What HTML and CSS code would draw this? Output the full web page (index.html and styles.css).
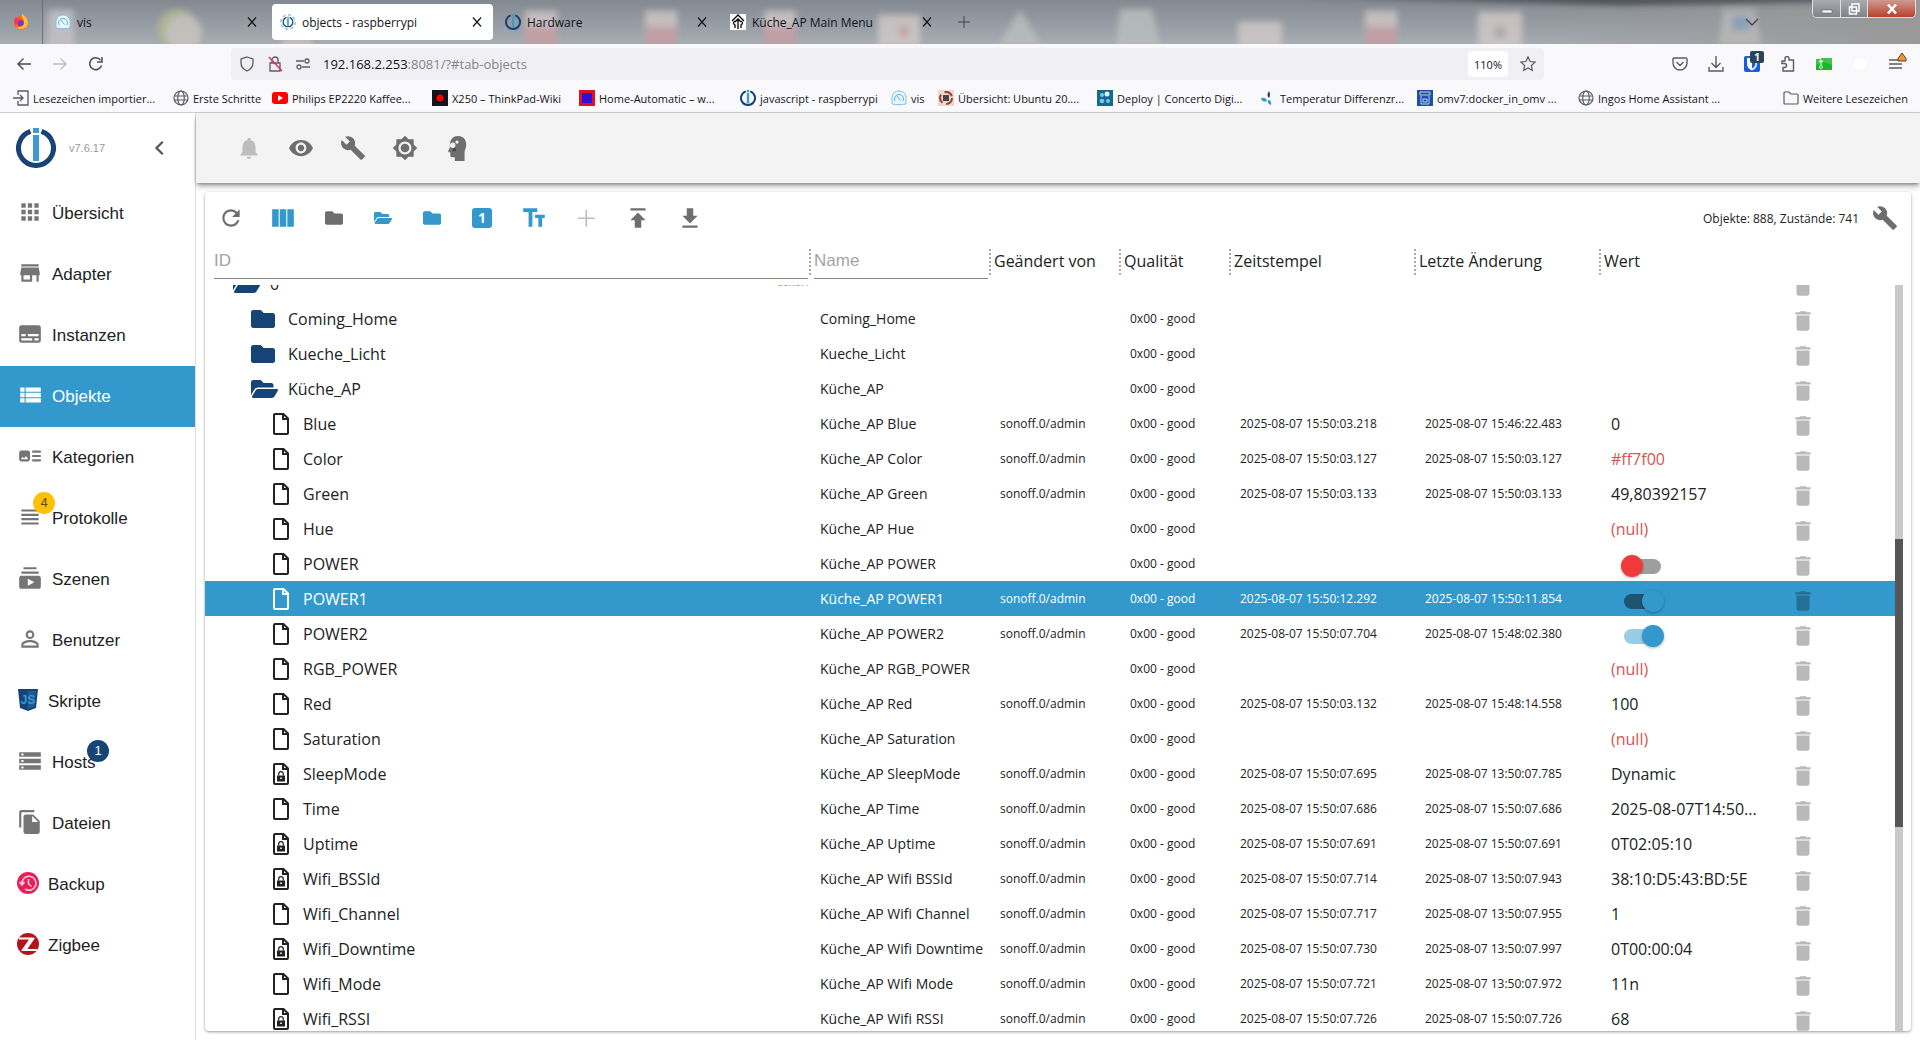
FILE: index.html
```html
<!DOCTYPE html>
<html lang="de">
<head>
  <meta charset="UTF-8">
  <meta name="viewport" content="width=device-width, initial-scale=1.0">
  <title>objects - raspberrypi</title>
  <link rel="stylesheet" href="styles.css">
</head>
<body>
  <!-- icon set -->
  <svg class="sprite" aria-hidden="true">
    <symbol id="close" viewBox="0 0 16 16"><path d="M4 3.5l8 9M12 3.5l-8 9" stroke="currentColor" stroke-width="1.2" fill="none"/></symbol>
    <symbol id="iobroker" viewBox="0 0 40 40">
      <path d="M14.500 3.400a17.500 17.500 0 1 0 11 0" fill="none" stroke="#164477" stroke-width="5"/>
      <path d="M17 7h6v26h-6zM17 0h6v5h-6z" fill="#3f9bc9"/>
    </symbol>
    <symbol id="vis" viewBox="0 0 16 16">
      <path d="M1 14V7q1-6 7-6t7 6v7q-7 1.500-14 0z" fill="#e8f6fd" stroke="#7cc3e6"/>
      <path d="M4 11a4.500 4.500 0 1 1 8 0M5.500 5.500l4 5" fill="none" stroke="#5aaedb"/>
    </symbol>
    <symbol id="globe" viewBox="0 0 16 16"><g fill="none" stroke="#5b5b66" stroke-width="1.200"><circle cx="8" cy="8" r="7"/><ellipse cx="8" cy="8" rx="3.300" ry="7"/><path d="M1 6h14M1 10h14"/></g></symbol>
    <symbol id="refresh" viewBox="0 0 24 24"><path d="M17.65 6.35C16.2 4.9 14.21 4 12 4c-4.42 0-7.99 3.58-7.99 8s3.57 8 7.990 8c3.730 0 6.840-2.550 7.730-6h-2.080c-.82 2.330-3.040 4-5.650 4-3.310 0-6-2.690-6-6s2.690-6 6-6c1.660 0 3.140.69 4.220 1.780L13 11h7V4l-2.350 2.350z"/></symbol>
    <symbol id="columns" viewBox="0 0 24 24"><path d="M2 4h6v16H2zM9 4h6v16H9zM16 4h6v16h-6z"/></symbol>
    <symbol id="folder" viewBox="0 0 512 512"><path d="M464 128H272l-64-64H48C21.490 64 0 85.490 0 112v288c0 26.510 21.490 48 48 48h416c26.510 0 48-21.490 48-48V176c0-26.510-21.490-48-48-48z"/></symbol>
    <symbol id="folder-open" viewBox="0 0 576 512"><path d="M572.694 292.093L500.270 416.248A63.997 63.997 0 0 1 444.989 448H45.025c-18.523 0-30.064-20.093-20.731-36.093l72.424-124.155A64 64 0 0 1 152 256h399.964c18.523 0 30.064 20.093 20.730 36.093zM152 224h328v-48c0-26.510-21.490-48-48-48H272l-64-64H48C21.490 64 0 85.490 0 112v278.046l69.077-118.418C86.214 242.250 117.989 224 152 224z"/></symbol>
    <symbol id="file" viewBox="0 0 16 22"><path d="M2 1h8.500L15 5.500V20q0 1-1 1H2q-1 0-1-1V2q0-1 1-1zM10 1v5h5" fill="none" stroke="currentColor" stroke-width="2"/></symbol>
    <symbol id="file-lock" viewBox="0 0 16 22"><path d="M2 1h8.500L15 5.500V20q0 1-1 1H2q-1 0-1-1V2q0-1 1-1zM10 1v5h5" fill="none" stroke="currentColor" stroke-width="2"/><path d="M5.700 12.500v-1.500a2.300 2.300 0 0 1 4.600 0v1.500" fill="none" stroke="currentColor" stroke-width="1.200"/><path fill-rule="evenodd" d="M4 12.500h8v6H4zM7.200 14.500v1.500h1.600v-1.500z"/></symbol>
    <symbol id="text-size" viewBox="0 0 24 24"><path d="M2 3h13v3.500H2zM7 3h3.500v17H7zM13 9h9v3h-9zM16 9h3.500v11H16z"/></symbol>
    <symbol id="plus" viewBox="0 0 24 24"><path d="M20 13h-7v7h-1.500v-7h-7v-1.500h7v-7H13v7h7z"/></symbol>
    <symbol id="publish" viewBox="0 0 24 24"><path d="M5 3v2h14V3H5zm0 11h4v7h6v-7h4l-7-7-7 7z"/></symbol>
    <symbol id="get" viewBox="0 0 24 24"><path d="M19 10h-4V3H9v7H5l7 7 7-7zM5 19v2h14v-2H5z"/></symbol>
    <symbol id="build" viewBox="0 0 24 24"><path d="M22.700 19l-9.100-9.100c.9-2.300.4-5-1.500-6.900-2-2-5-2.400-7.400-1.300L9 6 6 9 1.600 4.700C.4 7.100.9 10.100 2.900 12.100c1.900 1.900 4.600 2.400 6.900 1.500l9.100 9.100c.4.4 1 .4 1.400 0l2.300-2.300c.5-.4.5-1.100.1-1.400z"/></symbol>
    <symbol id="bell" viewBox="0 0 24 24"><path d="M12 22c1.100 0 2-.9 2-2h-4c0 1.100.89 2 2 2zm6-6v-5c0-3.070-1.640-5.640-4.500-6.320V4c0-.83-.67-1.500-1.500-1.500s-1.500.67-1.500 1.500v.68C7.630 5.360 6 7.920 6 11v5l-2 2v1h16v-1l-2-2z"/></symbol>
    <symbol id="eye" viewBox="0 0 24 24"><path d="M12 4.500C7 4.500 2.730 7.610 1 12c1.730 4.390 6 7.500 11 7.500s9.270-3.110 11-7.500c-1.730-4.390-6-7.500-11-7.500zM12 17c-2.760 0-5-2.240-5-5s2.240-5 5-5 5 2.240 5 5-2.240 5-5 5zm0-8c-1.660 0-3 1.340-3 3s1.340 3 3 3 3-1.340 3-3-1.340-3-3-3z"/></symbol>
    <symbol id="brightness" viewBox="0 0 24 24"><path d="M20 15.310L23.310 12 20 8.690V4h-4.690L12 .69 8.690 4H4v4.690L.69 12 4 15.310V20h4.690L12 23.310 15.310 20H20v-4.690zM12 18c-3.310 0-6-2.690-6-6s2.690-6 6-6 6 2.690 6 6-2.690 6-6 6z"/><circle cx="12" cy="12" r="4"/></symbol>
    <symbol id="head" viewBox="0 0 24 24"><path d="M13 1c5 0 7.500 3.500 7.500 8 0 3-1.500 5-1.500 6.500V24h-9v-3.500H7.500q-1.700 0-1.700-1.700V16H4v-1.500l1.500-3.200C5 5 7.500 1 13 1z"/><circle cx="8" cy="9.500" r="2.500" fill="#f3f3f3"/><circle cx="12" cy="6.500" r="1.500" fill="#f3f3f3"/><circle cx="9.500" cy="13.500" r="1.500" fill="#444"/></symbol>
    <symbol id="delete" viewBox="0 0 24 24"><path d="M6 19c0 1.100.9 2 2 2h8c1.100 0 2-.9 2-2V7H6v12zM19 4h-3.500l-1-1h-5l-1 1H5v2h14V4z"/></symbol>
    <symbol id="apps" viewBox="0 0 24 24"><path d="M4 8h4V4H4v4zm6 12h4v-4h-4v4zm-6 0h4v-4H4v4zm0-6h4v-4H4v4zm6 0h4v-4h-4v4zm6-10v4h4V4h-4zm-6 4h4V4h-4v4zm6 6h4v-4h-4v4zm0 6h4v-4h-4v4z"/></symbol>
    <symbol id="store" viewBox="0 0 24 24"><path d="M20 4H4v2h16V4zm1 10v-2l-1-5H4l-1 5v2h1v6h10v-6h4v6h2v-6h1zm-9 4H6v-4h6v4z"/></symbol>
    <symbol id="subtitles" viewBox="0 0 24 24"><path d="M20 4H4c-1.100 0-2 .9-2 2v12c0 1.100.9 2 2 2h16c1.100 0 2-.9 2-2V6c0-1.100-.9-2-2-2zM4 12h4v2H4v-2zm10 6H4v-2h10v2zm6 0h-4v-2h4v2zm0-4H10v-2h10v2z"/></symbol>
    <symbol id="view-list" viewBox="0 0 24 24"><path d="M3 14h4v-4H3v4zm0 5h4v-4H3v4zM3 9h4V5H3v4zm5 5h14v-4H8v4zm0 5h14v-4H8v4zM8 5v4h14V5H8z"/></symbol>
    <symbol id="art-track" viewBox="0 0 24 24"><path d="M22 13h-8v-2h8v2zm0-6h-8v2h8V7zm-8 10h8v-2h-8v2zm-2-8v6c0 1.100-.9 2-2 2H4c-1.100 0-2-.9-2-2V9c0-1.100.9-2 2-2h6c1.100 0 2 .9 2 2zm-1.500 6l-2.250-3-1.750 2.260-1.250-1.510L3.500 15h7z"/></symbol>
    <symbol id="headline" viewBox="0 0 24 24"><path d="M4 15h16v-2H4v2zm0 4h16v-2H4v2zm0-8h16V9H4v2zm0-6v2h16V5H4z"/></symbol>
    <symbol id="scenes" viewBox="0 0 24 24"><path d="M20 8H4V6h16v2zm-2-6H6v2h12V2zm4 10v8c0 1.100-.9 2-2 2H4c-1.100 0-2-.9-2-2v-8c0-1.100.9-2 2-2h16c1.100 0 2 .9 2 2zm-6 4l-6-3.270v6.530L16 16z"/></symbol>
    <symbol id="person" viewBox="0 0 24 24"><path d="M12 5.900a2.100 2.100 0 1 1 0 4.200 2.100 2.100 0 0 1 0-4.200m0 9c2.970 0 6.100 1.460 6.100 2.100v1.100H5.900V17c0-.64 3.130-2.100 6.100-2.100M12 4C9.790 4 8 5.790 8 8s1.790 4 4 4 4-1.790 4-4-1.790-4-4-4zm0 9c-2.670 0-8 1.340-8 4v3h16v-3c0-2.660-5.330-4-8-4z"/></symbol>
    <symbol id="storage" viewBox="0 0 24 24"><path d="M2 20h20v-4H2v4zm2-3h2v2H4v-2zM2 4v4h20V4H2zm4 3H4V5h2v2zm-4 7h20v-4H2v4zm2-3h2v2H4v-2z"/></symbol>
    <symbol id="files" viewBox="0 0 24 24"><path d="M16 1H4c-1.100 0-2 .9-2 2v14h2V3h12V1zm-1 4l6 6v10c0 1.100-.9 2-2 2H7.990C6.890 23 6 22.100 6 21l.01-14c0-1.100.89-2 1.990-2h7zm-1 7h5.500L14 6.500V12z"/></symbol>
  </svg>

  <header class="browser">
    <div class="titlebar">
      <!-- desktop icons shining through the glass frame -->
      <svg class="glass" viewBox="0 0 1920 44" preserveAspectRatio="none" aria-hidden="true">
        <defs>
          <filter id="soft" x="-5%" y="-50%" width="110%" height="200%"><feGaussianBlur stdDeviation="3"/></filter>
          <linearGradient id="pane" x1="0" y1="0" x2="0" y2="1"><stop offset="0" stop-color="#838991"/><stop offset="1" stop-color="#a7adb3"/></linearGradient>
          <linearGradient id="grey" x1="0" x2="1"><stop offset="0" stop-color="#999" stop-opacity="0"/><stop offset="1" stop-color="#999"/></linearGradient>
        </defs>
        <rect width="1920" height="44" fill="url(#pane)"/>
        <rect x="1500" width="420" height="44" fill="url(#grey)"/>
        <g filter="url(#soft)" opacity=".85">
          <path d="M1300-4h520v6l-200 3z" fill="#3e3f46"/>
          <rect x="48" y="10" width="26" height="40" fill="#c4c1c4"/>
          <circle cx="178" cy="29" r="20" fill="#b3ba90"/><circle cx="184" cy="33" r="18" fill="#c9c5bf"/>
          <rect x="282" y="38" width="30" height="12" fill="#ccc2c0"/>
          <g fill="#cdc4c5"><rect x="525" y="11" width="32" height="20"/><rect x="645" y="11" width="32" height="20"/><rect x="764" y="11" width="32" height="20"/><rect x="1365" y="11" width="32" height="20"/></g>
          <g fill="#c79fa4"><rect x="525" y="27" width="32" height="20"/><rect x="645" y="27" width="32" height="20"/><rect x="764" y="27" width="32" height="20"/><rect x="1365" y="27" width="32" height="20"/></g>
          <g fill="#cfc7c6"><rect x="878" y="15" width="42" height="32"/><rect x="1238" y="22" width="44" height="26"/><rect x="1478" y="12" width="44" height="38"/></g>
          <path d="M998 46l22-36 22 36zM1120 9h32l8 38h-44z" fill="#b9bdbd"/>
          <path d="M1724 10h30l8 36h-44z" fill="#b9b9b5"/><rect x="1732" y="16" width="18" height="14" fill="#86a0bd"/>
          <circle cx="904" cy="32" r="5" fill="#cb9b9f"/><circle cx="1500" cy="32" r="6" fill="#aaa"/>
        </g>
      </svg>
      <div class="pinned">
        <svg width="16" height="16" viewBox="0 0 16 16" aria-hidden="true"><circle cx="8" cy="9" r="7" fill="#ff5e2b"/><path d="M9 0q6 4 6 9a7 7 0 0 1-12 4q8 1 8-5 0-3-2-4z" fill="#ffc130"/><circle cx="7.500" cy="9" r="3.200" fill="#6f3ac6"/><path d="M1 9q0-4 2-6l2 2 3 1-3 2v2z" fill="#ff2f55"/></svg>
      </div>
      <nav class="tabs" aria-label="Tabs">
        <div class="tab"><svg class="fav"><use href="#vis"/></svg><span>vis</span><button aria-label="Tab schließen"><svg><use href="#close"/></svg></button></div>
        <div class="tab tab--active"><svg class="fav" viewBox="0 0 40 40"><circle cx="20" cy="20" r="18" fill="none" stroke="#9fc4dc" stroke-width="4" stroke-dasharray="8 6"/><use href="#iobroker" x="6" y="6" width="28" height="28"/></svg><span>objects - raspberrypi</span><button aria-label="Tab schließen"><svg><use href="#close"/></svg></button></div>
        <div class="tab"><svg class="fav"><use href="#iobroker"/></svg><span>Hardware</span><button aria-label="Tab schließen"><svg><use href="#close"/></svg></button></div>
        <div class="tab"><svg class="fav" viewBox="0 0 16 16"><path d="M0 0h16v16H0z" fill="#fff"/><path d="M2 7l6-6 6 6M8 15V5M5 8l3-3 3 3M5 14V11q-3-2 0-4M11 14v-3q3-2 0-4" fill="none" stroke="#000" stroke-width="1.300"/></svg><span>Küche_AP Main Menu</span><button aria-label="Tab schließen"><svg><use href="#close"/></svg></button></div>
        <button class="new-tab" aria-label="Neuer Tab"><svg viewBox="0 0 16 16"><path d="M8 2v12M2 8h12" stroke="#444" fill="none"/></svg></button>
      </nav>
      <button class="tab-list" aria-label="Alle Tabs"><svg viewBox="0 0 16 16"><path d="M2 5l6 6 6-6" stroke="#444" stroke-width="1.300" fill="none"/></svg></button>
      <div class="window-buttons">
        <button aria-label="Minimieren"><svg viewBox="0 0 16 12"><path d="M3 7h10v3H3z" fill="#fff" stroke="#555" stroke-width=".6"/></svg></button>
        <button aria-label="Verkleinern"><svg viewBox="0 0 16 12"><path d="M6 1h7v7H6zM3.500 4h7v7h-7z" fill="#8b8f96" stroke="#fff" stroke-width="1.500"/></svg></button>
        <button class="window-close" aria-label="Schließen"><svg viewBox="0 0 16 12"><path d="M4 1.500l8 9M12 1.500l-8 9" stroke="#fff" stroke-width="2.600"/></svg></button>
      </div>
    </div>

    <div class="navbar">
      <div class="nav-buttons">
        <button aria-label="Zurück"><svg viewBox="0 0 16 16"><path d="M15 8H2M7.500 2.500L2 8l5.500 5.500" fill="none" stroke="#4b4b55" stroke-width="1.400"/></svg></button>
        <button aria-label="Vor" disabled><svg viewBox="0 0 16 16"><path d="M1 8h13M8.500 2.500L14 8l-5.500 5.500" fill="none" stroke="#bdbdc4" stroke-width="1.400"/></svg></button>
        <button aria-label="Neu laden"><svg viewBox="0 0 16 16"><path d="M13.500 9.500A6 6 0 1 1 12.500 4M14 1v5H9" fill="none" stroke="#4b4b55" stroke-width="1.500"/></svg></button>
      </div>
      <div class="urlbar">
        <svg viewBox="0 0 16 16"><path d="M8 1l6 2v4q0 5.500-6 8-6-2.500-6-8V3z" fill="none" stroke="#5b5b66" stroke-width="1.300"/></svg>
        <svg viewBox="0 0 16 16"><path d="M3 7h10v8H3zM5 7V4a3 3 0 0 1 6 0v3" fill="none" stroke="#5b5b66" stroke-width="1.300"/><path d="M2 1l13 14" stroke="#e22850" stroke-width="1.400"/></svg>
        <svg viewBox="0 0 16 16"><path d="M1 5h8M7 11h8" stroke="#5b5b66" stroke-width="1.500"/><circle cx="12" cy="5" r="2" fill="none" stroke="#5b5b66" stroke-width="1.300"/><circle cx="4" cy="11" r="2" fill="none" stroke="#5b5b66" stroke-width="1.300"/></svg>
        <p class="address">192.168.2.253<span>:8081/?#tab-objects</span></p>
        <button class="zoom">110%</button>
        <button class="star" aria-label="Lesezeichen"><svg viewBox="0 0 16 16"><path d="M8 1l2.100 4.500 4.900.6-3.600 3.400.9 4.900L8 12l-4.300 2.400.9-4.900L1 6.100l4.900-.6z" fill="none" stroke="#5b5b66" stroke-width="1.200"/></svg></button>
      </div>
      <div class="extensions">
        <button aria-label="Pocket"><svg viewBox="0 0 16 16"><path d="M2 2h12q1 0 1 1v4a7 7 0 0 1-14 0V3q0-1 1-1zM4.500 6L8 9.500 11.500 6" fill="none" stroke="#5b5b66" stroke-width="1.400"/></svg></button>
        <button aria-label="Downloads"><svg viewBox="0 0 16 16"><path d="M8 0v11M3.500 7L8 11.500 12.500 7M1 11v4h14v-4" fill="none" stroke="#5b5b66" stroke-width="1.400"/></svg></button>
        <button aria-label="Bitwarden"><svg viewBox="0 0 16 16"><rect width="16" height="16" rx="2" fill="#175ddc"/><path d="M3 2h10v6q0 4-5 6.500Q3 12 3 8z" fill="#fff"/><path d="M8 3.500h3.500V8q0 2.500-3.500 4.500z" fill="#175ddc"/></svg><span class="ext-badge">1</span></button>
        <button aria-label="Erweiterungen"><svg viewBox="0 0 16 16"><path d="M5 5V2.500a2 2 0 0 1 4 0V4h4.500v11H3v-3.500h1.500a2 2 0 0 0 0-4H2V5z" fill="none" stroke="#5b5b66" stroke-width="1.400"/></svg></button>
        <button aria-label="Übersetzer"><svg viewBox="0 0 16 16"><path d="M0 3h5v-1h11v12H0z" fill="#3cc645"/><path d="M0 9l8-3 8 3v5H0z" fill="#25b02e"/><path d="M5 4v5M3 6l2-2 2 2" stroke="#d9fadb" stroke-width="1.200" fill="none"/><circle cx="5" cy="11" r="1.500" fill="none" stroke="#d9fadb"/></svg></button>
        <button aria-label="Addon"><svg viewBox="0 0 16 16"><circle cx="8" cy="8" r="6" fill="#fff"/></svg></button>
        <button aria-label="Menü"><svg viewBox="0 0 16 16"><path d="M1 4h13M1 8h13M1 12h13" stroke="#5b5b66" stroke-width="1.300"/></svg><svg class="menu-alert" viewBox="0 0 10 10"><path d="M5 1l4 5.500v2.500H1V6.500z" fill="#f0953b" stroke="#5e3e1e"/></svg></button>
      </div>
    </div>

    <nav class="bookmarks" aria-label="Lesezeichen">
      <a href="#"><svg viewBox="0 0 16 16"><path d="M5 5V1h10v14H5v-4M0 8h10M7 5l3 3-3 3" fill="none" stroke="#5b5b66" stroke-width="1.300"/></svg>Lesezeichen importier...</a>
      <a href="#"><svg><use href="#globe"/></svg>Erste Schritte</a>
      <a href="#"><svg viewBox="0 0 16 16"><rect y="2" width="16" height="12" rx="3" fill="#f00"/><path d="M6 5l5 3-5 3z" fill="#fff"/></svg>Philips EP2220 Kaffee...</a>
      <a href="#"><svg viewBox="0 0 16 16"><path d="M0 0h16v16H0z"/><circle cx="8" cy="8" r="3.500" fill="#f00"/></svg>X250 – ThinkPad-Wiki</a>
      <a href="#"><svg viewBox="0 0 16 16"><path d="M0 0h16v16H0z" fill="#e01020"/><path d="M3 3h10v10H3z" fill="#2a10d8"/></svg>Home-Automatic – w...</a>
      <a href="#"><svg><use href="#iobroker"/></svg>javascript - raspberrypi</a>
      <a href="#"><svg><use href="#vis"/></svg>vis</a>
      <a href="#"><svg viewBox="0 0 16 16"><path d="M0 0h16v16H0z" fill="#e5dccb"/><circle cx="8" cy="8" r="6" fill="none" stroke="#a33a35" stroke-width="2" stroke-dasharray="9 4"/><path d="M5 5h6v6H5z" fill="#444"/></svg>Übersicht: Ubuntu 20....</a>
      <a href="#"><svg viewBox="0 0 16 16"><path d="M0 0h16v16H0z" fill="#136a8c"/><g fill="#7cc7e6"><circle cx="5" cy="5" r="2"/><circle cx="10" cy="4" r="2.500" fill="#dff3fb"/><circle cx="5" cy="11" r="2.300"/><circle cx="11" cy="11" r="2"/></g></svg>Deploy | Concerto Digi...</a>
      <a href="#"><svg viewBox="0 0 16 16"><path d="M9 1q-3 4 0 7 2-3 0-7z" fill="#164477"/><path d="M1 8q5-1 6 3-5 2-6-3zM8 10q4 0 3 5-4-1-3-5z" fill="#3399cc"/></svg>Temperatur Differenzr...</a>
      <a href="#"><svg viewBox="0 0 16 16"><path d="M0 0h16v16H0z" fill="#1d4fa8"/><path d="M3 2h10v3H3zM4 6v8h8V6M6 9h4v3H6z" fill="none" stroke="#b9d0f5"/></svg>omv7:docker_in_omv ...</a>
      <a href="#"><svg><use href="#globe"/></svg>Ingos Home Assistant ...</a>
      <a href="#" class="bookmarks__more"><svg viewBox="0 0 16 16"><path d="M1 3q0-1 1-1h4l2 2h6q1 0 1 1v8q0 1-1 1H2q-1 0-1-1z" fill="none" stroke="#5b5b66" stroke-width="1.200"/></svg>Weitere Lesezeichen</a>
    </nav>
  </header>

  <div class="app">
    <aside class="sidebar">
      <div class="brand">
        <svg class="brand__logo"><use href="#iobroker"/></svg>
        <span class="brand__version">v7.6.17</span>
        <button class="brand__toggle" aria-label="Menü einklappen"><svg viewBox="0 0 16 16"><path d="M11 3L6 8l5 5" fill="none" stroke="#555" stroke-width="1.800"/></svg></button>
      </div>
      <nav class="menu">
        <a href="#"><svg><use href="#apps"/></svg>Übersicht</a>
        <a href="#"><svg><use href="#store"/></svg>Adapter</a>
        <a href="#"><svg><use href="#subtitles"/></svg>Instanzen</a>
        <a href="#" class="menu__active"><svg><use href="#view-list"/></svg>Objekte</a>
        <a href="#"><svg><use href="#art-track"/></svg>Kategorien</a>
        <a href="#"><svg><use href="#headline"/></svg>Protokolle<span class="badge badge--warn">4</span></a>
        <a href="#"><svg><use href="#scenes"/></svg>Szenen</a>
        <a href="#"><svg><use href="#person"/></svg>Benutzer</a>
        <a href="#" class="menu__custom"><svg viewBox="0 0 22 22"><path d="M1 0h20l-2 19-8 3-8-3z" fill="#164477"/><path d="M11 2h8l-1.500 15.500L11 20z" fill="#1e5a94"/><text x="11" y="15" text-anchor="middle" class="js-mark">JS</text></svg>Skripte</a>
        <a href="#"><svg><use href="#storage"/></svg>Hosts<span class="badge badge--info">1</span></a>
        <a href="#"><svg><use href="#files"/></svg>Dateien</a>
        <a href="#" class="menu__custom"><svg viewBox="0 0 22 22"><circle cx="11" cy="11" r="11" fill="#e91e56"/><path d="M5 12a7 7 0 1 1 3 5M2.500 10l2.500 3 2.500-3M11.500 7v5l3 2.500" fill="none" stroke="#fbd3de" stroke-width="1.600"/></svg>Backup</a>
        <a href="#" class="menu__custom"><svg viewBox="0 0 22 22"><circle cx="11" cy="11" r="11" fill="#b5121b"/><path d="M2 5.500h13L7 17h13" fill="none" stroke="#fff" stroke-width="2"/><path d="M13 5h5L9 18H4z" fill="#fff"/></svg>Zigbee</a>
      </nav>
    </aside>

    <main class="content">
      <div class="appbar">
        <button aria-label="Benachrichtigungen" disabled><svg><use href="#bell"/></svg></button>
        <button aria-label="Ansicht"><svg><use href="#eye"/></svg></button>
        <button aria-label="Einstellungen"><svg><use href="#build"/></svg></button>
        <button aria-label="Farbschema"><svg><use href="#brightness"/></svg></button>
        <button aria-label="Expertenmodus"><svg><use href="#head"/></svg></button>
      </div>

      <section class="card">
        <div class="toolbar">
          <button aria-label="Aktualisieren"><svg><use href="#refresh"/></svg></button>
          <button class="blue" aria-label="Spalten"><svg><use href="#columns"/></svg></button>
          <button class="small" aria-label="Alle zuklappen"><svg><use href="#folder"/></svg></button>
          <button class="small blue" aria-label="Alle aufklappen"><svg><use href="#folder-open"/></svg></button>
          <button class="small blue" aria-label="Eine Ebene zuklappen"><svg><use href="#folder"/></svg></button>
          <button class="blue" aria-label="Zustände anzeigen"><span class="one">1</span></button>
          <button class="blue" aria-label="Beschreibungen"><svg><use href="#text-size"/></svg></button>
          <button aria-label="Objekt hinzufügen" disabled><svg><use href="#plus"/></svg></button>
          <button aria-label="Objekte hochladen"><svg><use href="#publish"/></svg></button>
          <button aria-label="Objekte speichern"><svg><use href="#get"/></svg></button>
          <span class="toolbar__info">Objekte: 888, Zustände: 741</span>
          <button aria-label="Spalten konfigurieren"><svg><use href="#build"/></svg></button>
        </div>

        <div class="heads">
          <div class="head"><input type="text" placeholder="ID" aria-label="ID"></div>
          <div class="head"><input type="text" placeholder="Name" aria-label="Name"></div>
          <div class="head">Geändert von</div>
          <div class="head">Qualität</div>
          <div class="head">Zeitstempel</div>
          <div class="head">Letzte Änderung</div>
          <div class="head">Wert</div>
        </div>

        <div class="scroll">
          <div class="scroll__view">
            <table class="objects">
              <colgroup>
                <col><col class="w-name"><col class="w-from"><col class="w-quality"><col class="w-time"><col class="w-time"><col class="w-value"><col class="w-buttons">
              </colgroup>
              <tbody id="rows"></tbody>
            </table>
          </div>
          <div class="scroll__bar"><div class="scroll__thumb"></div></div>
        </div>
      </section>
    </main>
  </div>

  <script>
    // id, name, time, last change, value, icon, level
    const day = '2025-08-07 ';
    const objects = [
      ['0', '', '', '', '', 'open', 0],
      ['Coming_Home', 'Coming_Home', '', '', '', 'folder', 1],
      ['Kueche_Licht', 'Kueche_Licht', '', '', '', 'folder', 1],
      ['Küche_AP', 'Küche_AP', '', '', '', 'open', 1],
      ['Blue', 'Küche_AP Blue', '15:50:03.218', '15:46:22.483', '0', 'file', 2],
      ['Color', 'Küche_AP Color', '15:50:03.127', '15:50:03.127', '#ff7f00', 'file', 2],
      ['Green', 'Küche_AP Green', '15:50:03.133', '15:50:03.133', '49,80392157', 'file', 2],
      ['Hue', 'Küche_AP Hue', '', '', '(null)', 'file', 2],
      ['POWER', 'Küche_AP POWER', '', '', false, 'file', 2],
      ['POWER1', 'Küche_AP POWER1', '15:50:12.292', '15:50:11.854', true, 'file', 2],
      ['POWER2', 'Küche_AP POWER2', '15:50:07.704', '15:48:02.380', true, 'file', 2],
      ['RGB_POWER', 'Küche_AP RGB_POWER', '', '', '(null)', 'file', 2],
      ['Red', 'Küche_AP Red', '15:50:03.132', '15:48:14.558', '100', 'file', 2],
      ['Saturation', 'Küche_AP Saturation', '', '', '(null)', 'file', 2],
      ['SleepMode', 'Küche_AP SleepMode', '15:50:07.695', '13:50:07.785', 'Dynamic', 'lock', 2],
      ['Time', 'Küche_AP Time', '15:50:07.686', '15:50:07.686', '2025-08-07T14:50...', 'file', 2],
      ['Uptime', 'Küche_AP Uptime', '15:50:07.691', '15:50:07.691', '0T02:05:10', 'lock', 2],
      ['Wifi_BSSId', 'Küche_AP Wifi BSSId', '15:50:07.714', '13:50:07.943', '38:10:D5:43:BD:5E', 'lock', 2],
      ['Wifi_Channel', 'Küche_AP Wifi Channel', '15:50:07.717', '13:50:07.955', '1', 'file', 2],
      ['Wifi_Downtime', 'Küche_AP Wifi Downtime', '15:50:07.730', '13:50:07.997', '0T00:00:04', 'lock', 2],
      ['Wifi_Mode', 'Küche_AP Wifi Mode', '15:50:07.721', '13:50:07.972', '11n', 'file', 2],
      ['Wifi_RSSI', 'Küche_AP Wifi RSSI', '15:50:07.726', '15:50:07.726', '68', 'lock', 2]
    ];
    const icons = { open: 'folder-open', folder: 'folder', file: 'file', lock: 'file-lock' };

    function valueCell(id, value) {
      if (typeof value === 'boolean') {
        return `<input type="checkbox" class="switch" aria-label="${id}"${value ? ' checked' : ''}>`;
      }
      const unset = value === '(null)' || value[0] === '#';
      return unset ? `<span class="unset">${value}</span>` : value;
    }

    document.getElementById('rows').innerHTML = objects.map(([id, name, ts, lc, value, icon, level]) => `
      <tr class="${id === 'POWER1' ? 'selected' : ''}">
        <td><div class="node level-${level}">
          <svg class="node__icon node__icon--${icon}"><use href="#${icons[icon]}"/></svg>${id}
          ${level === 0 ? '<span class="adapter-logo">SONOFF</span>' : ''}
        </div></td>
        <td class="name">${name}</td>
        <td>${ts ? 'sonoff.0/admin' : ''}</td>
        <td>${level ? '0x00 - good' : ''}</td>
        <td>${ts ? day + ts : ''}</td>
        <td>${lc ? day + lc : ''}</td>
        <td class="value">${valueCell(id, value)}</td>
        <td class="actions"><button aria-label="${id} löschen"><svg><use href="#delete"/></svg></button></td>
      </tr>`).join('');
  </script>
</body>
</html>
```
FILE: styles.css
```css
* {
  box-sizing: border-box;
}

html, body {
  height: 100%;
}

body {
  margin: 0;
  display: flex;
  flex-direction: column;
  overflow: hidden;
  font-family: "Open Sans", "Noto Sans", sans-serif;
  color: #222;
  background: #fff;
}

button {
  padding: 0;
  border: none;
  background: none;
  font: inherit;
  color: inherit;
  display: flex;
  align-items: center;
  justify-content: center;
}

a {
  color: inherit;
  text-decoration: none;
}

svg {
  flex-shrink: 0;
  fill: currentColor;
}

.sprite {
  position: absolute;
  width: 0;
  height: 0;
}

/* browser frame */
.browser {
  flex-shrink: 0;
  font-size: 12px;
  color: #15141a;
  background: #f9f9fb;
  border-bottom: 1px solid #ccc;
}

.titlebar {
  position: relative;
  height: 44px;
  display: flex;
}

.titlebar > * {
  position: relative;
}

.titlebar .glass {
  position: absolute;
  inset: 0;
  width: 100%;
  height: 100%;
}

.pinned {
  width: 43px;
  display: flex;
  align-items: center;
  justify-content: center;
  border-right: 1px solid #6c737c;
}

.tabs {
  flex: 1;
  display: flex;
  align-items: center;
  gap: 4px;
  padding-left: 4px;
}

.tab {
  width: 221px;
  height: 36px;
  padding: 0 8px;
  display: flex;
  align-items: center;
  gap: 6px;
  border-radius: 4px;
}

.tab span {
  flex: 1;
  white-space: nowrap;
}

.tab--active {
  background: #fff;
}

.tab svg {
  display: block;
  width: 16px;
  height: 16px;
}

.new-tab {
  width: 34px;
}

.new-tab svg,
.tab-list svg {
  width: 16px;
  height: 16px;
}

.tab-list {
  width: 24px;
  margin-right: 48px;
}

.window-buttons {
  height: 18px;
  margin-right: 4px;
  display: grid;
  grid-template-columns: 28px 27px 47px;
  border: 1px solid #dfe1e4;
  border-top: none;
  border-radius: 0 0 5px 5px;
  overflow: hidden;
}

.window-buttons button {
  background: linear-gradient(#a8abb0, #80848a);
  border-right: 1px solid #dfe1e4;
}

.window-buttons .window-close {
  background: linear-gradient(#cf9a92, #b7412c);
  border-right: none;
}

.window-buttons svg {
  width: 16px;
  height: 12px;
}

.navbar {
  height: 40px;
  display: flex;
  align-items: center;
}

.nav-buttons {
  width: 231px;
  padding-left: 6px;
  display: flex;
}

.nav-buttons button {
  width: 36px;
}

.navbar svg {
  width: 16px;
  height: 16px;
}

.urlbar {
  flex: 1;
  height: 32px;
  padding: 0 8px;
  display: flex;
  align-items: center;
  gap: 12px;
  background: #f0f0f4;
  border-radius: 4px;
}

.address {
  flex: 1;
  margin: 0;
  font-size: 13px;
}

.address span {
  color: #84848c;
}

.zoom {
  height: 26px;
  padding: 0 6px;
  background: #fff;
  border-radius: 3px;
  font-size: 11px;
}

.extensions {
  width: 376px;
  padding-right: 6px;
  display: flex;
  justify-content: flex-end;
}

.extensions button {
  position: relative;
  width: 36px;
  height: 32px;
}

.ext-badge {
  position: absolute;
  top: 3px;
  right: 6px;
  width: 14px;
  height: 12px;
  line-height: 12px;
  border-radius: 2px;
  background: #2b4557;
  color: #fff;
  font-size: 10px;
  font-weight: bold;
}

.navbar .menu-alert {
  position: absolute;
  top: 4px;
  right: 7px;
  width: 10px;
  height: 10px;
}

.bookmarks {
  height: 28px;
  padding: 0 12px 0 13px;
  display: grid;
  grid-template-columns: 160px 99px 160px 147px 161px 151px 47px 159px 163px 157px 161px 1fr auto;
  align-items: center;
  white-space: nowrap;
  font-size: 11px;
}

.bookmarks a {
  display: flex;
  align-items: center;
  gap: 4px;
}

.bookmarks svg {
  width: 16px;
  height: 16px;
}

/* application */
.app {
  flex: 1;
  min-height: 0;
  display: flex;
}

.sidebar {
  width: 196px;
  flex-shrink: 0;
  border-right: 1px solid #ddd;
  font-family: "Liberation Sans", sans-serif;
}

.brand {
  height: 70px;
  padding: 0 26px 0 16px;
  display: flex;
  align-items: center;
}

.brand__logo {
  width: 40px;
  height: 40px;
}

.brand__version {
  flex: 1;
  padding-left: 13px;
  font-size: 11px;
  color: #999;
}

.brand__toggle svg {
  width: 20px;
  height: 20px;
}

.menu a {
  position: relative;
  height: 61px;
  padding-left: 17px;
  display: flex;
  align-items: center;
  gap: 9px;
  font-size: 17px;
}

.menu svg {
  width: 26px;
  height: 26px;
  margin-bottom: 4px;
  color: #757575;
}

.menu .menu__custom svg {
  width: 22px;
  height: 22px;
}

.menu .menu__active,
.menu .menu__active svg {
  background: #3399cc;
  color: #fff;
}

.badge {
  position: absolute;
  width: 22px;
  height: 22px;
  border-radius: 50%;
  line-height: 22px;
  text-align: center;
  font-size: 13px;
}

.badge--warn {
  top: 4px;
  left: 33px;
  background: #ffc107;
  color: #5a4a10;
}

.badge--info {
  top: 8px;
  left: 87px;
  background: #164477;
  color: #fff;
}

.js-mark {
  font: bold 12px "Liberation Sans", sans-serif;
  fill: #3399cc;
}

.content {
  flex: 1;
  min-width: 0;
  display: flex;
  flex-direction: column;
}

.appbar {
  height: 70px;
  flex-shrink: 0;
  padding-left: 27px;
  display: flex;
  align-items: center;
  background: #f3f3f3;
  box-shadow: 0 2px 4px -1px rgba(0, 0, 0, .5), 0 6px 5px -1px rgba(0, 0, 0, .14);
}

.appbar button,
.toolbar button {
  width: 52px;
  height: 52px;
  color: #6e6e6e;
}

.appbar svg,
.toolbar svg {
  width: 26px;
  height: 26px;
}

.appbar button:disabled,
.toolbar button:disabled {
  color: #bdbdbd;
}

.card {
  flex: 1;
  min-height: 0;
  margin: 9px 9px 9px 9px;
  display: flex;
  flex-direction: column;
  background: #fff;
  border-radius: 4px;
  box-shadow: 0 1px 3px rgba(0, 0, 0, .4);
}

.toolbar {
  height: 52px;
  flex-shrink: 0;
  display: flex;
  align-items: center;
}

.toolbar .small {
  width: 49px;
}

.toolbar .small svg {
  width: 18px;
  height: 18px;
}

.toolbar .blue {
  color: #3399cc;
}

.one {
  width: 20px;
  height: 20px;
  line-height: 20px;
  border-radius: 3px;
  background: #3399cc;
  color: #fff;
  font-size: 14px;
  font-weight: bold;
}

.toolbar__info {
  margin-left: auto;
  font-size: 12px;
}

.heads {
  height: 41px;
  flex-shrink: 0;
  padding-right: 16px;
  display: grid;
  grid-template-columns: 1fr 180px 130px 110px 185px 185px 294px;
}

.head {
  position: relative;
  height: 35px;
  padding-left: 3px;
  line-height: 34px;
  font-size: 16px;
}

/* drag handle between two columns */
.head + .head::before {
  content: "";
  position: absolute;
  left: -2px;
  top: 5px;
  height: 26px;
  border-left: 2px dotted #aaa;
}

.head:first-child {
  padding-left: 9px;
}

.head input {
  width: calc(100% - 3px);
  height: 35px;
  padding: 0;
  border: none;
  border-bottom: 1px solid #888;
  background: none;
  font: 17px "Liberation Sans", sans-serif;
  display: block;
}

.head input::placeholder {
  color: #a3a3a3;
}

.scroll {
  flex: 1;
  min-height: 0;
  padding-right: 8px;
  display: flex;
}

.scroll__view {
  flex: 1;
  min-width: 0;
  overflow: hidden;
}

.scroll__bar {
  width: 8px;
  display: grid;
  grid-template-rows: 254fr 288fr 204fr;
  background: #c9c9c9;
}

.scroll__thumb {
  grid-row: 2;
  background: #555;
}

.objects {
  width: 100%;
  margin-top: -19px; /* first row is half scrolled out */
  table-layout: fixed;
  border-collapse: collapse;
  font-size: 12px;
}

.w-name { width: 180px; }
.w-from { width: 130px; }
.w-quality { width: 110px; }
.w-time { width: 185px; }
.w-value { width: 180px; }
.w-buttons { width: 114px; }

.objects td {
  height: 35px;
  padding: 0 0 0 9px;
  white-space: nowrap;
}

.objects td:first-child {
  padding: 0;
}

.objects .name {
  font-size: 14px;
}

.objects .value {
  padding-left: 10px;
  font-size: 16px;
}

.selected {
  background: #3399cc;
  color: #fff;
}

.node {
  display: flex;
  align-items: center;
  font-size: 16px;
}

.node__icon {
  width: 27px;
  height: 24px;
  margin-right: 10px;
  color: #164477;
}

.node__icon--folder {
  width: 24px;
  margin-right: 13px;
}

.node__icon--file,
.node__icon--lock {
  width: 16px;
  height: 22px;
  margin-right: 14px;
  color: #222;
}

.selected .node__icon {
  color: #fff;
}

.level-0 { padding-left: 28px; }
.level-1 { padding-left: 46px; }
.level-2 { padding-left: 68px; }

.adapter-logo {
  margin-left: auto;
  font: bold 8px "Liberation Sans", sans-serif;
  color: #f39a2d;
}

.unset {
  color: #d9534f;
}

.switch {
  appearance: none;
  display: block;
  position: relative;
  width: 37px;
  height: 15px;
  margin: 6px 0 0 13px;
  border-radius: 8px;
  background: #9e9e9e;
}

.switch::before {
  content: "";
  position: absolute;
  top: -4px;
  left: -3px;
  width: 22px;
  height: 22px;
  border-radius: 50%;
  background: #ef3b3b;
  box-shadow: 0 1px 3px rgba(0, 0, 0, .3);
}

.switch:checked {
  background: #99cce6;
}

.switch:checked::before {
  left: 18px;
  background: #3399cc;
}

.selected .switch {
  background: #1f5470;
}

.actions button {
  margin-top: 4px;
  color: #b9b9b9;
}

.actions svg {
  width: 26px;
  height: 26px;
}

.selected .actions button {
  color: #256f94;
}
```
